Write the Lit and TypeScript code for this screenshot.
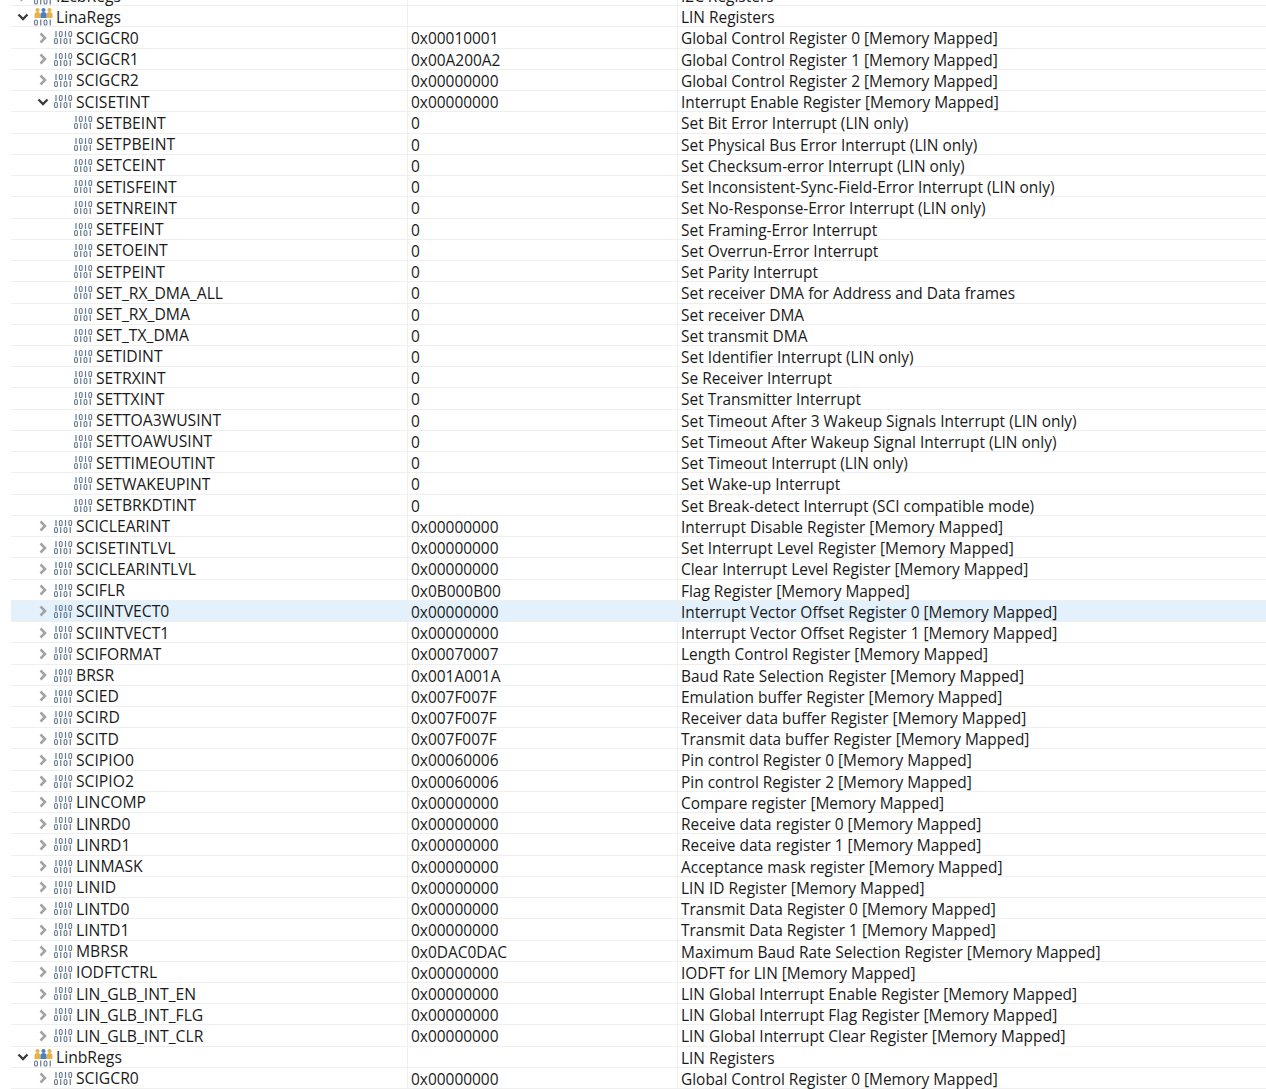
import { LitElement, html, css, svg } from "lit";
import { customElement } from "lit/decorators.js";

type R = [number, string, string, string, string?];
const rows: R[] = [
  [0, "I2cbRegs", "", "I2C Registers", "closed"],
  [0, "LinaRegs", "", "LIN Registers", "open"],
  [1, "SCIGCR0", "0x00010001", "Global Control Register 0 [Memory Mapped]"],
  [1, "SCIGCR1", "0x00A200A2", "Global Control Register 1 [Memory Mapped]"],
  [1, "SCIGCR2", "0x00000000", "Global Control Register 2 [Memory Mapped]"],
  [1, "SCISETINT", "0x00000000", "Interrupt Enable Register [Memory Mapped]", "open"],
  [2, "SETBEINT", "0", "Set Bit Error Interrupt (LIN only)"],
  [2, "SETPBEINT", "0", "Set Physical Bus Error Interrupt (LIN only)"],
  [2, "SETCEINT", "0", "Set Checksum-error Interrupt (LIN only)"],
  [2, "SETISFEINT", "0", "Set Inconsistent-Sync-Field-Error Interrupt (LIN only)"],
  [2, "SETNREINT", "0", "Set No-Response-Error Interrupt (LIN only)"],
  [2, "SETFEINT", "0", "Set Framing-Error Interrupt"],
  [2, "SETOEINT", "0", "Set Overrun-Error Interrupt"],
  [2, "SETPEINT", "0", "Set Parity Interrupt"],
  [2, "SET_RX_DMA_ALL", "0", "Set receiver DMA for Address and Data frames"],
  [2, "SET_RX_DMA", "0", "Set receiver DMA"],
  [2, "SET_TX_DMA", "0", "Set transmit DMA"],
  [2, "SETIDINT", "0", "Set Identifier Interrupt (LIN only)"],
  [2, "SETRXINT", "0", "Se Receiver Interrupt"],
  [2, "SETTXINT", "0", "Set Transmitter Interrupt"],
  [2, "SETTOA3WUSINT", "0", "Set Timeout After 3 Wakeup Signals Interrupt (LIN only)"],
  [2, "SETTOAWUSINT", "0", "Set Timeout After Wakeup Signal Interrupt (LIN only)"],
  [2, "SETTIMEOUTINT", "0", "Set Timeout Interrupt (LIN only)"],
  [2, "SETWAKEUPINT", "0", "Set Wake-up Interrupt"],
  [2, "SETBRKDTINT", "0", "Set Break-detect Interrupt (SCI compatible mode)"],
  [1, "SCICLEARINT", "0x00000000", "Interrupt Disable Register [Memory Mapped]"],
  [1, "SCISETINTLVL", "0x00000000", "Set Interrupt Level Register [Memory Mapped]"],
  [1, "SCICLEARINTLVL", "0x00000000", "Clear Interrupt Level Register [Memory Mapped]"],
  [1, "SCIFLR", "0x0B000B00", "Flag Register [Memory Mapped]"],
  [1, "SCIINTVECT0", "0x00000000", "Interrupt Vector Offset Register 0 [Memory Mapped]"],
  [1, "SCIINTVECT1", "0x00000000", "Interrupt Vector Offset Register 1 [Memory Mapped]"],
  [1, "SCIFORMAT", "0x00070007", "Length Control Register [Memory Mapped]"],
  [1, "BRSR", "0x001A001A", "Baud Rate Selection Register [Memory Mapped]"],
  [1, "SCIED", "0x007F007F", "Emulation buffer Register [Memory Mapped]"],
  [1, "SCIRD", "0x007F007F", "Receiver data buffer Register [Memory Mapped]"],
  [1, "SCITD", "0x007F007F", "Transmit data buffer Register [Memory Mapped]"],
  [1, "SCIPIO0", "0x00060006", "Pin control Register 0 [Memory Mapped]"],
  [1, "SCIPIO2", "0x00060006", "Pin control Register 2 [Memory Mapped]"],
  [1, "LINCOMP", "0x00000000", "Compare register [Memory Mapped]"],
  [1, "LINRD0", "0x00000000", "Receive data register 0 [Memory Mapped]"],
  [1, "LINRD1", "0x00000000", "Receive data register 1 [Memory Mapped]"],
  [1, "LINMASK", "0x00000000", "Acceptance mask register [Memory Mapped]"],
  [1, "LINID", "0x00000000", "LIN ID Register [Memory Mapped]"],
  [1, "LINTD0", "0x00000000", "Transmit Data Register 0 [Memory Mapped]"],
  [1, "LINTD1", "0x00000000", "Transmit Data Register 1 [Memory Mapped]"],
  [1, "MBRSR", "0x0DAC0DAC", "Maximum Baud Rate Selection Register [Memory Mapped]"],
  [1, "IODFTCTRL", "0x00000000", "IODFT for LIN [Memory Mapped]"],
  [1, "LIN_GLB_INT_EN", "0x00000000", "LIN Global Interrupt Enable Register [Memory Mapped]"],
  [1, "LIN_GLB_INT_FLG", "0x00000000", "LIN Global Interrupt Flag Register [Memory Mapped]"],
  [1, "LIN_GLB_INT_CLR", "0x00000000", "LIN Global Interrupt Clear Register [Memory Mapped]"],
  [0, "LinbRegs", "", "LIN Registers", "open"],
  [1, "SCIGCR0", "0x00000000", "Global Control Register 0 [Memory Mapped]"],
];

const bitRow = (bits: string, y: number) =>
  [...bits].map((b, i) => {
    const x = i * 4.75;
    return b === "1"
      ? svg`<line x1=${x + 2} x2=${x + 2} y1=${y} y2=${y + 6} stroke="#64788e" stroke-width="1.200"></line>`
      : svg`<rect x=${x + 0.6} y=${y + 0.5} width="2.800" height="5" rx="1.300" fill="none" stroke="#64788e" stroke-width="1.100"></rect>`;
  });

const regIcon = svg`${bitRow("1010", 1)}${bitRow("0101", 8)}`;

@customElement("app-root")
export class AppRoot extends LitElement {
  static styles = css`
    :host { display: block; height: 1089px; overflow: hidden; background: #fff; font-family: "Open Sans", "Noto Sans", sans-serif; font-size: 15.45px; color: #1a1a1a; }
    .table { margin-top: -15px; padding-left: 11px; }
    .row { display: grid; grid-template-columns: 397px 270px 1fr; height: 21.24px; box-sizing: border-box; border-bottom: 1px solid #efefef; line-height: 20px; }
    .row.sel { background: #e3f1fc; }
    .cell { display: flex; align-items: center; white-space: nowrap; min-width: 0; border-right: 1px solid #efefef; box-sizing: border-box; }
    .cell:last-child { border-right: 0; }
    .name { font-size: 15.7px; }
    .val, .desc { padding-left: 3px; padding-top: 1px; }
    .arrow { width: 12px; height: 12px; flex: none; margin-right: 5px; }
    .ind0 { padding-left: 6px; }
    .ind1 { padding-left: 26px; }
    .ind2 { padding-left: 63px; }
    .ico { width: 19px; height: 15px; flex: none; margin-right: 3px; }
    .ico.group { height: 19px; }
  `;

  arrow(kind?: string) {
    return kind === "open"
      ? html`<svg class="arrow" viewBox="0 0 12 12"><path d="M1.500 3.500 6 8l4.500-4.500" fill="none" stroke="#3a3a3a" stroke-width="2.300"/></svg>`
      : html`<svg class="arrow" viewBox="0 0 12 12"><path d="M3.500 1.500 8 6l-4.500 4.500" fill="none" stroke="#a2a2a2" stroke-width="2.500"/></svg>`;
  }

  icon(group: boolean) {
    return group
      ? html`<svg class="ico group" viewBox="0 0 19 19">
          <g fill="#e6b54a"><circle cx="3.500" cy="3" r="2.100"/><circle cx="15.500" cy="3" r="2.100"/><path d="M.5 11V7.500q0-2.500 3-2.500t3 2.500V11z"/><path d="M12.500 11V7.500q0-2.500 3-2.500t3 2.500V11z"/></g>
          <g fill="#4f80bd"><circle cx="9.500" cy="3" r="2.100"/><path d="M6.500 11V7.500q0-2.500 3-2.500t3 2.500V11z"/></g>
          ${bitRow("0101", 12.5)}
        </svg>`
      : html`<svg class="ico" viewBox="0 0 19 15">${regIcon}</svg>`;
  }

  render() {
    return html`<div class="table">
      ${rows.map((r) => {
        const [lvl, name, val, desc, st] = r;
        return html`<div class="row ${name === "SCIINTVECT0" ? "sel" : ""}">
          <div class="cell name ind${lvl}">
            ${lvl === 2 ? null : this.arrow(st ?? "closed")}
            ${this.icon(lvl === 0)}
            <span>${name}</span>
          </div>
          <div class="cell val">${val}</div>
          <div class="cell desc">${desc}</div>
        </div>`;
      })}
    </div>`;
  }
}
